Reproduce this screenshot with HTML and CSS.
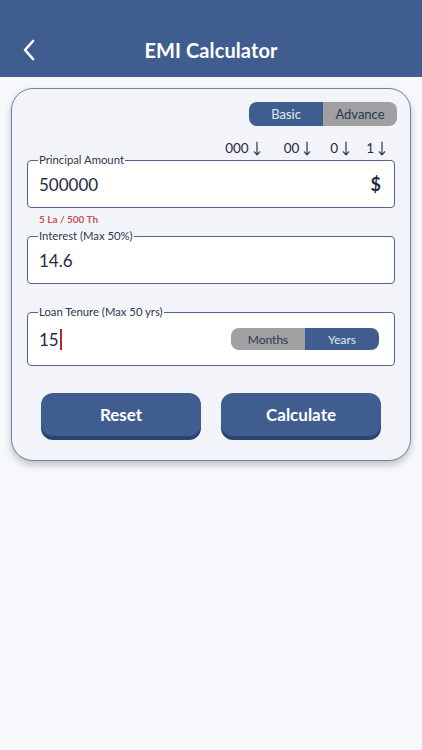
FILE: index.html
```html
<!DOCTYPE html>
<html lang="en">
<head>
<meta charset="utf-8">
<title>EMI Calculator</title>
<link rel="stylesheet" href="styles.css">
</head>
<body>
<header class="header">
  <div class="back">
    <svg width="14" height="22" viewBox="0 0 14 22"><path d="M11 2 L3 11 L11 20" fill="none" stroke="#fff" stroke-width="2.6" stroke-linecap="round" stroke-linejoin="round"/></svg>
  </div>
  <h1 class="title">EMI Calculator</h1>
  <div></div>
</header>
<main class="main">
  <section class="card">
    <div class="seg-row">
      <div class="seg">
        <span class="seg-item on">Basic</span>
        <span class="seg-item off">Advance</span>
      </div>
    </div>
    <div class="digits">
      <span class="dg d1">000<svg class="arr" viewBox="0 0 8 15"><path d="M4 1 V13.8 M1.3 10.8 L4 13.8 L6.7 10.8" fill="none" stroke="#2A3550" stroke-width="1.2" stroke-linecap="round" stroke-linejoin="round"/></svg></span>
      <span class="dg d2">00<svg class="arr" viewBox="0 0 8 15"><path d="M4 1 V13.8 M1.3 10.8 L4 13.8 L6.7 10.8" fill="none" stroke="#2A3550" stroke-width="1.2" stroke-linecap="round" stroke-linejoin="round"/></svg></span>
      <span class="dg d3">0<svg class="arr" viewBox="0 0 8 15"><path d="M4 1 V13.8 M1.3 10.8 L4 13.8 L6.7 10.8" fill="none" stroke="#2A3550" stroke-width="1.2" stroke-linecap="round" stroke-linejoin="round"/></svg></span>
      <span class="dg">1<svg class="arr" viewBox="0 0 8 15"><path d="M4 1 V13.8 M1.3 10.8 L4 13.8 L6.7 10.8" fill="none" stroke="#2A3550" stroke-width="1.2" stroke-linecap="round" stroke-linejoin="round"/></svg></span>
    </div>
    <fieldset class="field">
      <legend>Principal Amount</legend>
      <div class="row">
        <span class="value">500000</span>
        <span class="cur">$</span>
      </div>
    </fieldset>
    <div class="hint">5 La / 500 Th</div>
    <fieldset class="field">
      <legend>Interest (Max 50%)</legend>
      <div class="row">
        <span class="value">14.6</span>
      </div>
    </fieldset>
    <fieldset class="field tenure">
      <legend>Loan Tenure (Max 50 yrs)</legend>
      <div class="row tall">
        <span class="value">15<span class="caret"></span></span>
        <div class="seg small">
          <span class="seg-item off">Months</span>
          <span class="seg-item on">Years</span>
        </div>
      </div>
    </fieldset>
    <div class="buttons">
      <button class="btn">Reset</button>
      <button class="btn">Calculate</button>
    </div>
  </section>
</main>
</body>
</html>
```
FILE: styles.css
```css
* { box-sizing: border-box; }
html, body { margin: 0; padding: 0; }
body {
  background: #F7F8FC;
  font-family: Lato, "Open Sans", sans-serif;
  color: #1F2A44;
  width: 422px;
  height: 750px;
}
.header {
  background: #3F5E8F;
  height: 77px;
  padding-top: 23px;
  display: grid;
  grid-template-columns: 1fr auto 1fr;
  align-items: center;
}
.back {
  padding-left: 22px;
  display: flex;
  align-items: center;
}
.back svg { display: block; }
.title {
  margin: 0;
  color: #fff;
  font-size: 20px;
  font-weight: 700;
  letter-spacing: 0.1px;
}
.main { padding: 11px; }
.card {
  background: #F2F4FA;
  border: 1px solid #6F82A4;
  border-radius: 22px;
  box-shadow: 0 4px 7px rgba(0, 0, 0, 0.22);
  padding: 13px 15px 24px;
}
.seg-row {
  display: flex;
  justify-content: flex-end;
  margin-right: -2px;
}
.seg {
  display: flex;
  border-radius: 8px;
  overflow: hidden;
}
.seg-item {
  width: 74px;
  height: 24px;
  display: flex;
  align-items: center;
  justify-content: center;
  font-size: 13px;
}
.seg-item.on { background: #3F5E8F; color: #E3E9F3; }
.seg-item.off { background: #A0A0A2; color: #2B3850; }
.digits {
  display: flex;
  justify-content: flex-end;
  padding-right: 9px;
  margin-top: 14px;
  height: 16px;
  line-height: 16px;
  font-size: 13.5px;
  color: #1F2A44;
  margin-bottom: -3px;
}
.dg {
  display: flex;
  align-items: center;
}
.arr {
  width: 8px;
  height: 15px;
  margin-left: 4px;
  display: block;
}
.d1 { margin-right: 23px; }
.d2 { margin-right: 19px; }
.d3 { margin-right: 16px; }
.field {
  margin: 0;
  padding: 0 13px 6px 11px;
  border: 1px solid #50668F;
  border-radius: 4px;
  background: #fff;
  min-width: 0;
}
.field legend {
  padding: 0 1px;
  margin-left: -1px;
  font-size: 11.3px;
  line-height: 14px;
  color: #2B3850;
}
.row {
  height: 34px;
  display: flex;
  align-items: center;
  justify-content: space-between;
}
.row.tall { height: 40px; padding-right: 2px; }
.value {
  font-size: 17px;
  color: #1F2A44;
  display: flex;
  align-items: center;
}
.cur {
  font-size: 18px;
  font-weight: 700;
  color: #1F2A44;
}
.caret {
  display: inline-block;
  width: 2px;
  height: 21px;
  background: #B8262C;
  margin-left: 1px;
}
.hint {
  font-size: 10px;
  font-weight: 700;
  color: #C25350;
  line-height: 14px;
  margin: 4px 0 3px 12px;
}
.tenure { margin-top: 21px; }
.seg.small .seg-item {
  height: 22px;
  font-size: 12px;
}
.buttons {
  display: flex;
  justify-content: center;
  gap: 20px;
  margin-top: 27px;
}
.btn {
  width: 160px;
  height: 43px;
  border: none;
  border-radius: 12px;
  background: #3F5E8F;
  box-shadow: 0 4px 0 #2A4370;
  color: #fff;
  font-family: Lato, "Open Sans", sans-serif;
  font-size: 17px;
  font-weight: 700;
}
```
